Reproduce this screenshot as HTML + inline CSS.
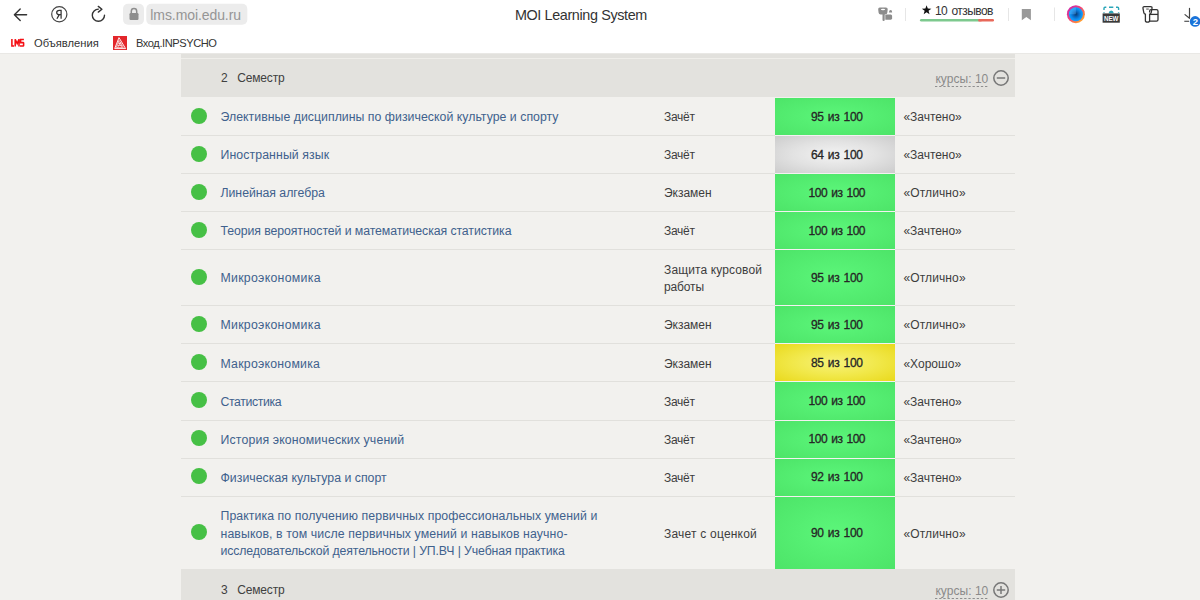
<!DOCTYPE html>
<html><head><meta charset="utf-8">
<style>
*{margin:0;padding:0;box-sizing:border-box}
html,body{width:1200px;height:600px;overflow:hidden;background:#f2f1ee;font-family:"Liberation Sans",sans-serif}
.abs{position:absolute}
.t{position:absolute;white-space:nowrap;line-height:1}
#chrome{position:absolute;left:0;top:0;width:1200px;height:53px;background:#fff}
#chromeline{position:absolute;left:0;top:53px;width:1200px;height:1px;background:#e9e8e5}
#strip{position:absolute;left:181px;top:54px;width:834px;height:4px;background:#e2e1dd}
#strip2{position:absolute;left:181px;top:58px;width:834px;height:1px;background:#efeeea}
.hdr{position:absolute;left:181px;width:834px;height:38px;background:#e3e2de}
.hdr .num{position:absolute;left:40px;top:12.5px;font-size:12px;color:#404040;line-height:1}
.hdr .sem{position:absolute;left:56.3px;top:12.5px;font-size:12px;color:#404040;line-height:1}
.hdr .cnt{position:absolute;left:754.4px;top:14px;font-size:12px;color:#8a8a8a;line-height:1}
.hdr .dash{position:absolute;left:754px;top:27px}
.hdr .ic{position:absolute;left:811.2px;top:10.1px}
.sep{position:absolute;left:181px;width:834px;height:1px;background:#e1e0dc}
.sep::after{content:"";position:absolute;left:594px;top:0;width:120px;height:1px;background:#f4f1f1}
.dot{position:absolute;left:191px;width:16px;height:16px;border-radius:50%;background:#46c045}
.name{position:absolute;left:220.5px;font-size:12.3px;color:#40618d;line-height:17.5px;white-space:nowrap}
.type{position:absolute;left:664px;font-size:12px;color:#3d3d3d;line-height:17.5px;white-space:nowrap}
.score{position:absolute;left:775px;width:120px}
.stxt{position:absolute;left:775px;width:120px;text-align:center;font-size:12px;color:#262626;line-height:17.5px;-webkit-text-stroke:0.3px #262626;padding-left:3.6px}
.g{background:radial-gradient(ellipse at center,#5cf67a 0%,#55ee72 45%,#4de468 100%)}
.gr{background:radial-gradient(ellipse at center,#f3f3f3 0%,#e2e2e2 50%,#cccccc 100%)}
.y{background:radial-gradient(ellipse at center,#f7f27a 0%,#f1e84a 50%,#e9d91c 100%)}
.res{position:absolute;left:903.4px;font-size:12px;color:#3d3d3d;line-height:17.5px;white-space:nowrap}
</style></head><body>
<div id="chrome">
  <!-- back -->
  <svg class="abs" style="left:0;top:0" width="260" height="30" viewBox="0 0 260 30">
    <path d="M20.2 9.1 L14.4 14.8 L20.2 20.5 M14.6 14.8 H26.6" fill="none" stroke="#333" stroke-width="1.4" stroke-linecap="round" stroke-linejoin="round"/>
    <circle cx="59.3" cy="14.25" r="7.6" fill="none" stroke="#444" stroke-width="1.2"/>
    <path d="M61.1 18.8 V10.3 H59.4 Q56.7 10.3 56.7 12.5 Q56.7 14.7 59.4 14.7 H61.1 M59.3 14.6 L56.9 18.8" fill="none" stroke="#333" stroke-width="1.25"/>
    <path d="M98.4 9.1 A6.1 6.1 0 1 0 104.5 15.2" fill="none" stroke="#333" stroke-width="1.4" stroke-linecap="round"/>
    <path d="M98.3 6.4 L101.9 9.2 L98.3 12.1" fill="none" stroke="#333" stroke-width="1.4" stroke-linecap="round" stroke-linejoin="round"/>
    <rect x="123" y="3.8" width="21" height="21" rx="5" fill="#ececec"/>
    <rect x="129.5" y="13" width="9" height="7" rx="1.2" fill="#8e8e8e"/>
    <path d="M131.3 13 V11.2 A2.7 2.7 0 0 1 136.7 11.2 V13" fill="none" stroke="#8e8e8e" stroke-width="1.5"/>
    <rect x="146.3" y="3.8" width="101" height="21" rx="5" fill="#ececec"/>
  </svg>
  
  <span class="t" style="left:150.3px;top:7.9px;font-size:14px;color:#959595;letter-spacing:-0.081px">lms.moi.edu.ru</span>
  <span class="t" style="left:514.9px;top:8.3px;font-size:14.4px;color:#333;letter-spacing:-0.376px">MOI Learning System</span>
  <!-- right icons -->
  <svg class="abs" style="left:860px;top:0" width="340" height="30" viewBox="860 0 340 30">
    <path d="M879.8 7.4 H885.9 Q887.9 7.4 887.7 9.4 L887.3 12.8 Q887.1 14.6 885.3 14.6 H884.7 V20 Q884.7 21.1 883.6 21.1 Q882.5 21.1 882.5 20 V14.6 H880.6 Q878.8 14.6 878.6 12.8 L878.2 9.4 Q878 7.4 879.8 7.4 Z" fill="#8c8c8c"/>
    <ellipse cx="883" cy="9.5" rx="2.2" ry="0.65" fill="#fff"/>
    <path d="M888.9 12.5 Q889.1 10.1 890.6 10.1 Q892.1 10.1 892.2 12.5 Z" fill="#8c8c8c"/>
    <path d="M885.3 15.6 Q885.3 14.4 886.5 14.4 H890.6 Q892.1 14.4 892.1 15.9 V18.3 Q892.1 19.7 890.7 19.7 H885.3 Z" fill="#8c8c8c"/>
    <rect x="905" y="8" width="1" height="13" fill="#e6e6e6"/>
    <rect x="920" y="19" width="59.5" height="2.4" rx="1.2" fill="#7dc98e"/>
    <rect x="978.5" y="19" width="15.5" height="2.4" rx="1.2" fill="#e8685a"/>
    <rect x="978.5" y="19" width="3" height="2.4" fill="#e8685a"/>
    <path d="M926.60 5.20 L927.80 8.54 L931.36 8.65 L928.55 10.83 L929.54 14.25 L926.60 12.25 L923.66 14.25 L924.65 10.83 L921.84 8.65 L925.40 8.54 Z" fill="#111"/>
    <rect x="1008" y="8" width="1" height="13" fill="#e6e6e6"/>
    <path d="M1021.8 9 H1030.9 V20.3 L1026.35 16.9 L1021.8 20.3 Z" fill="#999"/>
    <rect x="1054" y="7.5" width="1" height="13.5" fill="#e6e6e6"/>
    <defs>
      <linearGradient id="ring" x1="0" y1="0" x2="1" y2="1"><stop offset="0" stop-color="#c21fb8"/><stop offset="0.45" stop-color="#f0437a"/><stop offset="0.75" stop-color="#ff8a3a"/><stop offset="1" stop-color="#ffd23a"/></linearGradient>
      <radialGradient id="blue" cx="0.5" cy="0.5" r="0.5"><stop offset="0" stop-color="#08396e"/><stop offset="0.35" stop-color="#0a62b8"/><stop offset="0.75" stop-color="#0d8ff0"/><stop offset="1" stop-color="#12a0ff"/></radialGradient>
    </defs>
    <circle cx="1075.9" cy="14.2" r="9" fill="url(#ring)"/>
    <circle cx="1075.9" cy="14.2" r="7" fill="url(#blue)"/>
    <path d="M1075.9 14.2 L1075.9 7.4 A6.8 6.8 0 0 0 1069.1 14.2 Z" fill="#6cc4ff" opacity="0.35"/>
    <path d="M1104 10 V8.3 Q1104 7.3 1105 7.3 H1106.3 M1109 7.3 H1113.3 M1116 7.3 H1117.6 Q1118.6 7.3 1118.6 8.3 V10 M1104 12.2 V13 M1118.6 12.2 V13" fill="none" stroke="#2aa6b8" stroke-width="1.4"/>
    <path d="M1108.6 13.3 Q1109 10.6 1111.2 10.6 Q1113.4 10.6 1113.8 13.3 Z" fill="#2aa6b8"/>
    <rect x="1102.6" y="13.4" width="17.2" height="9.3" fill="#3a3a3a"/>
    <text x="1103.9" y="20.5" font-family="Liberation Sans" font-weight="bold" font-size="7" fill="#fff" textLength="14.5" lengthAdjust="spacingAndGlyphs">NEW</text>
    <path d="M1144.3 6.6 H1150.6 Q1152.3 6.6 1152 8.3 L1151.2 12.6 Q1150.9 14 1149.6 14.2 V20.8 Q1149.6 22.2 1147.5 22.2 Q1145.4 22.2 1145.4 20.8 V14.2 Q1144.1 14 1143.8 12.6 L1143 8.3 Q1142.7 6.6 1144.3 6.6 Z" fill="none" stroke="#333" stroke-width="1.3"/>
    <rect x="1146.2" y="8.6" width="2.6" height="0.9" fill="#333"/>
    <path d="M1149.6 12.6 V11.2 Q1149.6 9.7 1151 9.7 H1156.5 Q1158 9.7 1158 11.2 V19.8 Q1158 21.2 1156.5 21.2 H1149.6" fill="none" stroke="#333" stroke-width="1.3"/>
    <path d="M1149.8 14.4 H1158" fill="none" stroke="#333" stroke-width="1.3"/>
    <path d="M1189.5 8.3 V18.3 L1185 14.6" fill="none" stroke="#444" stroke-width="1.2" stroke-linecap="round" stroke-linejoin="round"/>
    <rect x="1184.3" y="20.7" width="4.8" height="1.2" fill="#555"/>
    <circle cx="1195.1" cy="21.4" r="5.8" fill="#fff"/>
    <circle cx="1195.1" cy="21.4" r="5.3" fill="#1a73d9"/>
    <text x="1195.3" y="25" text-anchor="middle" font-family="Liberation Sans" font-weight="bold" font-size="9.5" fill="#fff">2</text>
  </svg>
  <span class="t" style="left:935px;top:5.2px;font-size:12px;color:#333;word-spacing:1.5px;letter-spacing:-0.567px">10 отзывов</span>
  <!-- bookmarks -->
  <svg class="abs" style="left:0;top:30px" width="30" height="22" viewBox="0 30 30 22">
    <path d="M11.9 38.9 V45.9 H14 M15.2 46.4 V39.3 L17.2 43.6 L19 39.3 V46.4 M23.9 39.5 H20.6 V42.6 H23.1 Q23.6 42.6 23.6 43.1 V45.6 Q23.6 46 23.1 46 H20" fill="none" stroke="#f40f14" stroke-width="1.55"/>
  </svg>
  <span class="t" style="left:34px;top:37.6px;font-size:11.2px;color:#333;letter-spacing:0.01px">Объявления</span>
  <svg class="abs" style="left:112.7px;top:35.6px" width="14.2" height="14.2" viewBox="0 0 14 14">
    <rect width="14" height="14" fill="#e3262b"/>
    <path d="M5.9 1.6 L12.4 12.4 H1.7 Z" fill="none" stroke="#fff" stroke-width="0.9"/>
    <path d="M5.9 4.2 L10.2 11.3 H3.2 Z M4.3 9.3 L9.2 9.3 M5.1 7.3 L8.2 7.3 M4.6 11.3 L7.6 6 M8.8 11.3 L5.3 5.4" fill="none" stroke="#fff" stroke-width="0.6"/>
  </svg>
  <span class="t" style="left:136px;top:37.6px;font-size:11.1px;color:#333;letter-spacing:-0.427px">Вход.INPSYCHO</span>
</div>
<div id="chromeline"></div>
<div id="strip"></div>
<div id="strip2"></div>
<div class="hdr" style="top:59px"><div class="abs" style="left:0;top:0px;width:834px;height:38px">
  <span class="num">2</span><span class="sem" style="letter-spacing:-0.172px">Семестр</span>
  <span class="cnt" style="letter-spacing:0.042px">курсы: 10</span>
  <svg class="dash" width="56" height="1" viewBox="0 0 56 1"><rect x="0.00" y="0" width="2.3" height="1" fill="#8f8f8f"/><rect x="4.17" y="0" width="2.3" height="1" fill="#8f8f8f"/><rect x="8.34" y="0" width="2.3" height="1" fill="#8f8f8f"/><rect x="12.51" y="0" width="2.3" height="1" fill="#8f8f8f"/><rect x="16.68" y="0" width="2.3" height="1" fill="#8f8f8f"/><rect x="20.85" y="0" width="2.3" height="1" fill="#8f8f8f"/><rect x="25.02" y="0" width="2.3" height="1" fill="#8f8f8f"/><rect x="29.19" y="0" width="2.3" height="1" fill="#8f8f8f"/><rect x="33.36" y="0" width="2.3" height="1" fill="#8f8f8f"/><rect x="37.53" y="0" width="2.3" height="1" fill="#8f8f8f"/><rect x="41.70" y="0" width="2.3" height="1" fill="#8f8f8f"/><rect x="45.87" y="0" width="2.3" height="1" fill="#8f8f8f"/><rect x="50.04" y="0" width="2.3" height="1" fill="#8f8f8f"/></svg>
  <svg class="ic" width="18" height="18" viewBox="0 0 18 18"><circle cx="9" cy="9" r="7.2" fill="none" stroke="#777" stroke-width="1.5"/><line x1="4.8" y1="9" x2="13.2" y2="9" stroke="#777" stroke-width="1.5"/></svg>
</div></div>
<div class="dot" style="top:107.70px"></div>
<div class="name" style="top:109.45px"><span style="letter-spacing:0.029px">Элективные дисциплины по физической культуре и спорту</span></div>
<div class="type" style="top:109.45px"><span style="letter-spacing:-0.27px">Зачёт</span></div>
<div class="score g" style="top:98px;height:37px"></div>
<div class="stxt" style="top:108.95px;letter-spacing:-0.33px;word-spacing:1.2px">95 из 100</div>
<div class="res" style="top:109.45px;letter-spacing:-0.024px">«Зачтено»</div>
<div class="sep" style="top:135px"></div>
<div class="dot" style="top:145.70px"></div>
<div class="name" style="top:147.45px"><span style="letter-spacing:0.097px">Иностранный язык</span></div>
<div class="type" style="top:147.45px"><span style="letter-spacing:-0.27px">Зачёт</span></div>
<div class="score gr" style="top:136px;height:37px"></div>
<div class="stxt" style="top:146.95px;letter-spacing:-0.33px;word-spacing:1.2px">64 из 100</div>
<div class="res" style="top:147.45px;letter-spacing:-0.024px">«Зачтено»</div>
<div class="sep" style="top:173px"></div>
<div class="dot" style="top:183.70px"></div>
<div class="name" style="top:185.45px"><span style="letter-spacing:-0.033px">Линейная алгебра</span></div>
<div class="type" style="top:185.45px"><span style="letter-spacing:-0.039px">Экзамен</span></div>
<div class="score g" style="top:174px;height:37px"></div>
<div class="stxt" style="top:184.95px;letter-spacing:-0.48px;word-spacing:1.2px">100 из 100</div>
<div class="res" style="top:185.45px;letter-spacing:0.129px">«Отлично»</div>
<div class="sep" style="top:211px"></div>
<div class="dot" style="top:221.70px"></div>
<div class="name" style="top:223.45px"><span style="letter-spacing:-0.084px">Теория вероятностей и математическая статистика</span></div>
<div class="type" style="top:223.45px"><span style="letter-spacing:-0.27px">Зачёт</span></div>
<div class="score g" style="top:212px;height:37px"></div>
<div class="stxt" style="top:222.95px;letter-spacing:-0.48px;word-spacing:1.2px">100 из 100</div>
<div class="res" style="top:223.45px;letter-spacing:-0.024px">«Зачтено»</div>
<div class="sep" style="top:249px"></div>
<div class="dot" style="top:268.70px"></div>
<div class="name" style="top:270.45px"><span style="letter-spacing:0.289px">Микроэкономика</span></div>
<div class="type" style="top:261.7px"><span style="letter-spacing:0.127px">Защита курсовой</span><br><span style="letter-spacing:-0.15px">работы</span></div>
<div class="score g" style="top:250px;height:55px"></div>
<div class="stxt" style="top:269.95px;letter-spacing:-0.33px;word-spacing:1.2px">95 из 100</div>
<div class="res" style="top:270.45px;letter-spacing:0.129px">«Отлично»</div>
<div class="sep" style="top:305px"></div>
<div class="dot" style="top:315.70px"></div>
<div class="name" style="top:317.45px"><span style="letter-spacing:0.289px">Микроэкономика</span></div>
<div class="type" style="top:317.45px"><span style="letter-spacing:-0.039px">Экзамен</span></div>
<div class="score g" style="top:306px;height:37px"></div>
<div class="stxt" style="top:316.95px;letter-spacing:-0.33px;word-spacing:1.2px">95 из 100</div>
<div class="res" style="top:317.45px;letter-spacing:0.129px">«Отлично»</div>
<div class="sep" style="top:343px"></div>
<div class="dot" style="top:354.00px"></div>
<div class="name" style="top:355.75px"><span style="letter-spacing:0.234px">Макроэкономика</span></div>
<div class="type" style="top:355.75px"><span style="letter-spacing:-0.039px">Экзамен</span></div>
<div class="score y" style="top:344px;height:37px"></div>
<div class="stxt" style="top:355.25px;letter-spacing:-0.33px;word-spacing:1.2px">85 из 100</div>
<div class="res" style="top:355.75px;letter-spacing:0.023px">«Хорошо»</div>
<div class="sep" style="top:381px"></div>
<div class="dot" style="top:392.00px"></div>
<div class="name" style="top:393.75px"><span style="letter-spacing:-0.376px">Статистика</span></div>
<div class="type" style="top:393.75px"><span style="letter-spacing:-0.27px">Зачёт</span></div>
<div class="score g" style="top:382px;height:38px"></div>
<div class="stxt" style="top:393.25px;letter-spacing:-0.48px;word-spacing:1.2px">100 из 100</div>
<div class="res" style="top:393.75px;letter-spacing:-0.024px">«Зачтено»</div>
<div class="sep" style="top:420px"></div>
<div class="dot" style="top:430.00px"></div>
<div class="name" style="top:431.75px"><span style="letter-spacing:0.144px">История экономических учений</span></div>
<div class="type" style="top:431.75px"><span style="letter-spacing:-0.27px">Зачёт</span></div>
<div class="score g" style="top:421px;height:37px"></div>
<div class="stxt" style="top:431.25px;letter-spacing:-0.48px;word-spacing:1.2px">100 из 100</div>
<div class="res" style="top:431.75px;letter-spacing:-0.024px">«Зачтено»</div>
<div class="sep" style="top:458px"></div>
<div class="dot" style="top:468.00px"></div>
<div class="name" style="top:469.75px"><span style="letter-spacing:0.019px">Физическая культура и спорт</span></div>
<div class="type" style="top:469.75px"><span style="letter-spacing:-0.27px">Зачёт</span></div>
<div class="score g" style="top:459px;height:37px"></div>
<div class="stxt" style="top:469.25px;letter-spacing:-0.33px;word-spacing:1.2px">92 из 100</div>
<div class="res" style="top:469.75px;letter-spacing:-0.024px">«Зачтено»</div>
<div class="sep" style="top:496px"></div>
<div class="dot" style="top:524.00px"></div>
<div class="name" style="top:508.25px"><span style="letter-spacing:0.075px">Практика по получению первичных профессиональных умений и</span><br><span style="letter-spacing:0.098px">навыков, в том числе первичных умений и навыков научно-</span><br><span style="letter-spacing:-0.122px">исследовательской деятельности | УП.ВЧ | Учебная практика</span></div>
<div class="type" style="top:525.75px"><span style="letter-spacing:0.213px">Зачет с оценкой</span></div>
<div class="score g" style="top:497px;height:72px"></div>
<div class="stxt" style="top:525.25px;letter-spacing:-0.33px;word-spacing:1.2px">90 из 100</div>
<div class="res" style="top:525.75px;letter-spacing:0.129px">«Отлично»</div>
<div class="hdr" style="top:569px"><div class="abs" style="left:0;top:2.4px;width:834px;height:38px">
  <span class="num">3</span><span class="sem" style="letter-spacing:-0.172px">Семестр</span>
  <span class="cnt" style="letter-spacing:0.042px">курсы: 10</span>
  <svg class="dash" width="56" height="1" viewBox="0 0 56 1"><rect x="0.00" y="0" width="2.3" height="1" fill="#8f8f8f"/><rect x="4.17" y="0" width="2.3" height="1" fill="#8f8f8f"/><rect x="8.34" y="0" width="2.3" height="1" fill="#8f8f8f"/><rect x="12.51" y="0" width="2.3" height="1" fill="#8f8f8f"/><rect x="16.68" y="0" width="2.3" height="1" fill="#8f8f8f"/><rect x="20.85" y="0" width="2.3" height="1" fill="#8f8f8f"/><rect x="25.02" y="0" width="2.3" height="1" fill="#8f8f8f"/><rect x="29.19" y="0" width="2.3" height="1" fill="#8f8f8f"/><rect x="33.36" y="0" width="2.3" height="1" fill="#8f8f8f"/><rect x="37.53" y="0" width="2.3" height="1" fill="#8f8f8f"/><rect x="41.70" y="0" width="2.3" height="1" fill="#8f8f8f"/><rect x="45.87" y="0" width="2.3" height="1" fill="#8f8f8f"/><rect x="50.04" y="0" width="2.3" height="1" fill="#8f8f8f"/></svg>
  <svg class="ic" width="18" height="18" viewBox="0 0 18 18"><circle cx="9" cy="9" r="7.2" fill="none" stroke="#777" stroke-width="1.5"/><line x1="4.8" y1="9" x2="13.2" y2="9" stroke="#777" stroke-width="1.5"/><line x1="9" y1="4.9" x2="9" y2="13.1" stroke="#777" stroke-width="1.5"/></svg>
</div></div>
</body></html>
